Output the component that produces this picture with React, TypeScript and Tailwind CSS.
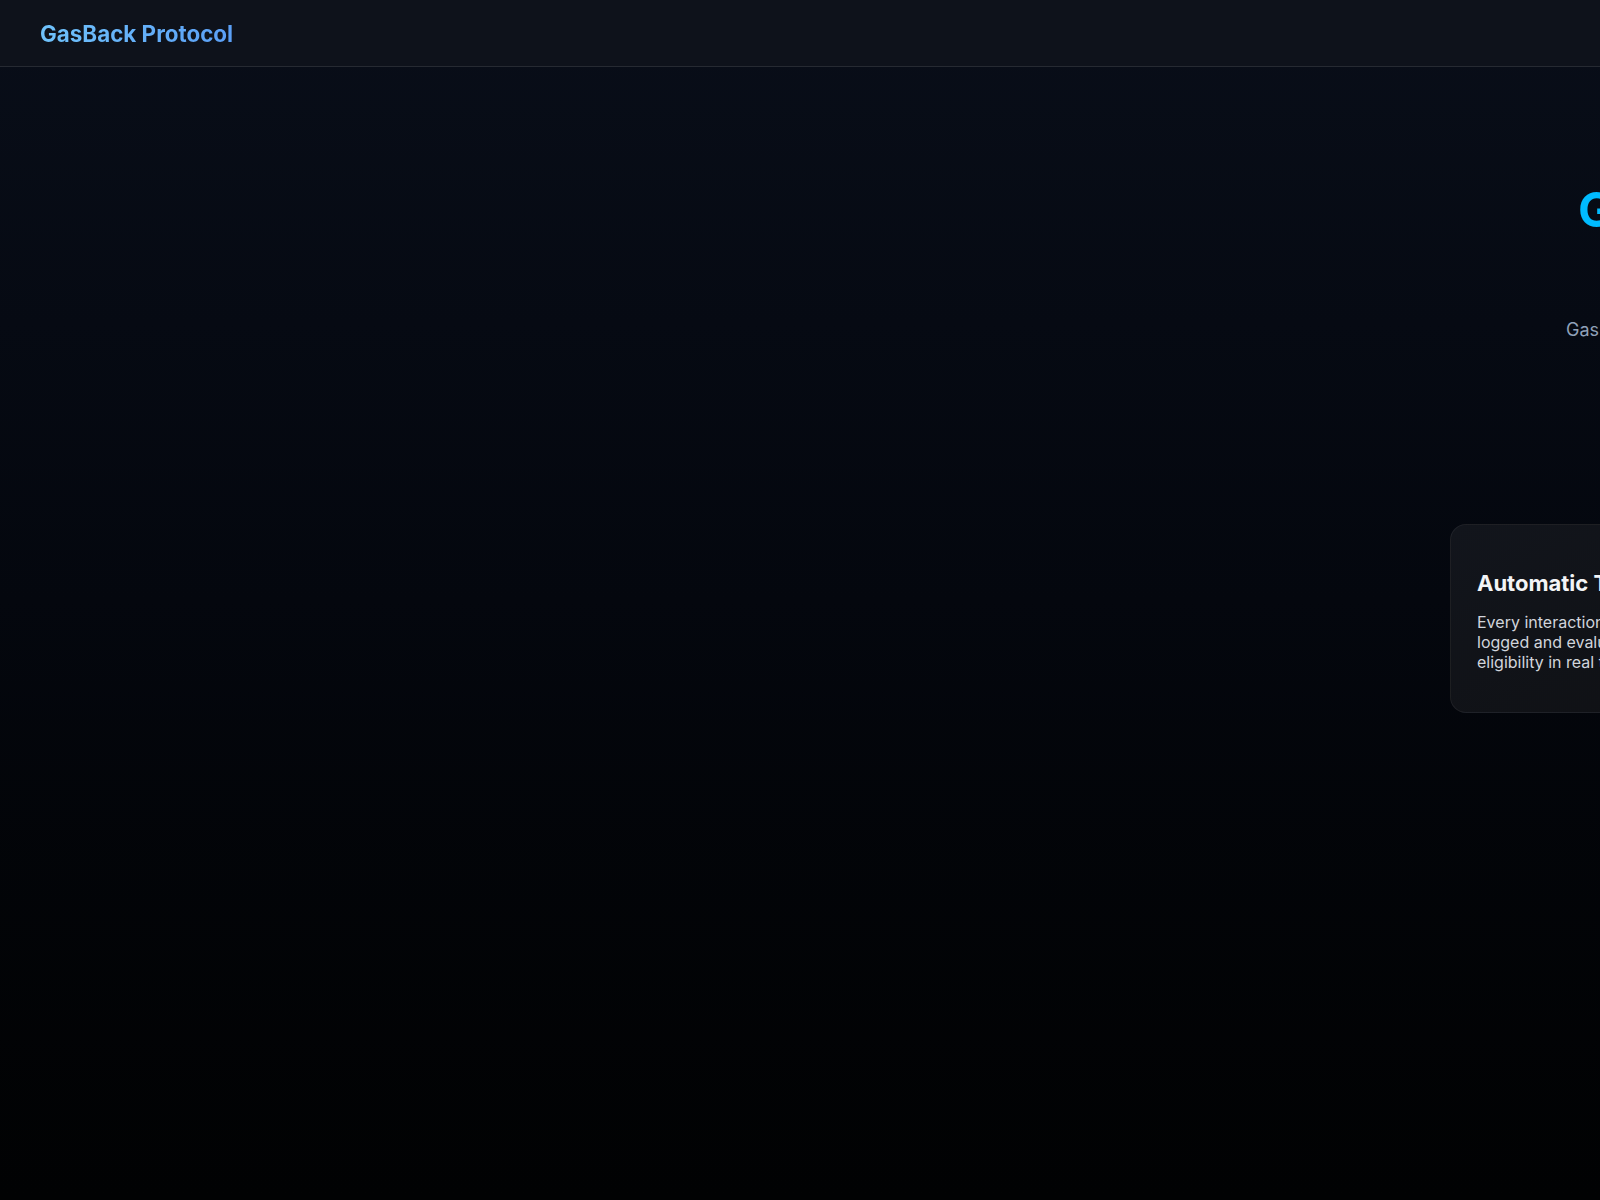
import React from "react";

const features = [
  {
    title: "Automatic Tracking",
    lines: [
      "Every interaction is",
      "logged and evaluated for",
      "eligibility in real time.",
    ],
  },
  {
    title: "Instant Refunds",
    lines: ["Eligible gas costs are", "returned straight to your", "wallet."],
  },
  {
    title: "Transparent Rules",
    lines: ["Open, verifiable logic", "decides every payout", "on-chain."],
  },
];

function Header() {
  return (
    <header className="border-b border-white/10 bg-[#0e121b] px-10 pt-[18px] pb-4">
      <span className="bg-gradient-to-r from-[#6fc2fb] to-[#5b9ff6] bg-clip-text text-[22.4px] leading-8 font-bold text-transparent">
        GasBack Protocol
      </span>
    </header>
  );
}

function FeatureCard({ title, lines }: { title: string; lines: string[] }) {
  return (
    <div className="w-[380px] shrink-0 rounded-2xl border border-white/[0.06] bg-gradient-to-br from-[#12151c] to-[#0f1013] px-[26px] pt-[42px] pb-10">
      <h3 className="mb-[13px] whitespace-nowrap text-[22px] leading-8 font-bold text-gray-100">
        {title}
      </h3>
      <p className="whitespace-nowrap text-base leading-5 text-gray-300">
        {lines.map((l, i) => (
          <React.Fragment key={i}>
            {l}
            {i < lines.length - 1 && <br />}
          </React.Fragment>
        ))}
      </p>
    </div>
  );
}

export default function App() {
  return (
    <div
      className="min-h-screen overflow-hidden bg-gradient-to-b from-[#090e19] via-[#04070e] to-[#010203] text-white"
      style={{ fontFamily: "Inter, 'Noto Sans', sans-serif" }}
    >
      <Header />
      <main className="pl-[1450px] pt-[119px]">
        <div className="w-[1300px]">
          <h1 className="ml-[128px] whitespace-nowrap bg-gradient-to-r from-sky-400 to-blue-500 bg-clip-text text-5xl leading-none font-bold text-transparent">
            GasBack Protocol
          </h1>
          <p className="ml-[116px] mt-[82px] whitespace-nowrap text-lg text-slate-400">
            Gas refunds for every eligible on-chain interaction.
          </p>
          <div className="mt-[180px] flex gap-6">
            {features.map((f) => (
              <FeatureCard key={f.title} {...f} />
            ))}
          </div>
        </div>
      </main>
    </div>
  );
}
